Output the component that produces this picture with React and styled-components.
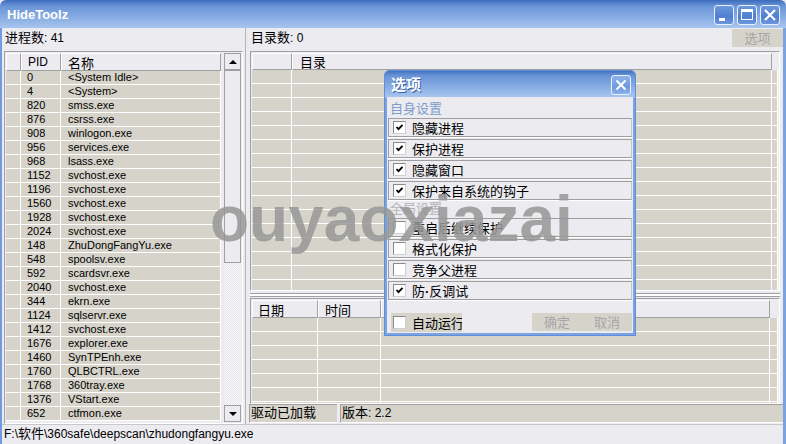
import React from 'react'
import styled, { createGlobalStyle } from 'styled-components'

const LATIN = `"Liberation Sans", "Noto Sans CJK SC", sans-serif`
const CJK = `"Noto Sans CJK SC", "Liberation Sans", sans-serif`

const GlobalStyle = createGlobalStyle`
  html, body {
    margin: 0;
    padding: 0;
    background: #ecebf0;
  }
  body {
    font-family: ${LATIN};
    font-size: 11px;
    color: #000;
  }
  * {
    box-sizing: border-box;
  }
`

const processes = [
  ['0', '<System Idle>'],
  ['4', '<System>'],
  ['820', 'smss.exe'],
  ['876', 'csrss.exe'],
  ['908', 'winlogon.exe'],
  ['956', 'services.exe'],
  ['968', 'lsass.exe'],
  ['1152', 'svchost.exe'],
  ['1196', 'svchost.exe'],
  ['1560', 'svchost.exe'],
  ['1928', 'svchost.exe'],
  ['2024', 'svchost.exe'],
  ['148', 'ZhuDongFangYu.exe'],
  ['548', 'spoolsv.exe'],
  ['592', 'scardsvr.exe'],
  ['2040', 'svchost.exe'],
  ['344', 'ekrn.exe'],
  ['1124', 'sqlservr.exe'],
  ['1412', 'svchost.exe'],
  ['1676', 'explorer.exe'],
  ['1460', 'SynTPEnh.exe'],
  ['1760', 'QLBCTRL.exe'],
  ['1768', '360tray.exe'],
  ['1376', 'VStart.exe'],
  ['652', 'ctfmon.exe'],
]

const ownOptions = [
  ['隐藏进程', true],
  ['保护进程', true],
  ['隐藏窗口', true],
  ['保护来自系统的钩子', true],
]

const globalOptions = [
  ['重启后继续保护', false],
  ['格式化保护', false],
  ['竞争父进程', false],
  ['防·反调试', true],
]

// the middle dot looks narrow in the original, so give it a latin font
const OptionLabel = ({ text }) => {
  const parts = text.split('·')
  if (parts.length === 1) return <OptionText>{text}</OptionText>
  return (
    <OptionText>
      {parts[0]}
      <Dot>·</Dot>
      {parts[1]}
    </OptionText>
  )
}

const CheckBox = ({ checked }) => (
  <Box>
    {checked && (
      <svg width='9' height='9' viewBox='0 0 9 9'>
        <polyline points='1.5,4 3.5,6.2 7.5,1.8' fill='none' stroke='#000' strokeWidth='1.8' />
      </svg>
    )}
  </Box>
)

const App = () => {
  return (
    <Window>
      <GlobalStyle />
      <TitleBar>
        <Title>HideToolz</Title>
        <WinButtons>
          <WinButton>
            <svg width='18' height='18' viewBox='0 0 18 18'>
              <rect x='4' y='12' width='6' height='3' fill='#fff' />
            </svg>
          </WinButton>
          <WinButton>
            <svg width='18' height='18' viewBox='0 0 18 18'>
              <rect x='3.5' y='3.5' width='11' height='10' fill='none' stroke='#fff' strokeWidth='1' />
              <rect x='3' y='3' width='12' height='3' fill='#fff' />
            </svg>
          </WinButton>
          <WinButton>
            <svg width='18' height='18' viewBox='0 0 18 18'>
              <path d='M4 4 L14 14 M14 4 L4 14' stroke='#fff' strokeWidth='2.2' />
            </svg>
          </WinButton>
        </WinButtons>
      </TitleBar>

      <Main>
        <Body>
          <LeftPane>
            <PaneLabel>
              <Cn>进程数</Cn>: 41
            </PaneLabel>
            <ListFrame>
              <ListBody>
                <HeadRow $h={18}>
                  <HeadCell $w={15} />
                  <HeadCell $w={40} $pad={6}>PID</HeadCell>
                  <HeadCell $w={160} $pad={6}>
                    <Cn>名称</Cn>
                  </HeadCell>
                </HeadRow>
                {processes.map(([pid, name], i) => (
                  <Row key={i}>
                    <Cell $w={15} />
                    <Cell $w={40} $pad={6}>{pid}</Cell>
                    <Cell $w={160} $pad={7}>{name}</Cell>
                  </Row>
                ))}
              </ListBody>
              <ScrollBar>
                <ScrollButton>
                  <Arrow />
                </ScrollButton>
                <Thumb />
                <Track />
                <ScrollButton>
                  <Arrow $down />
                </ScrollButton>
              </ScrollBar>
            </ListFrame>
          </LeftPane>

          <PaneSplit />

          <RightPane>
            <TopRow>
              <PaneLabel>
                <Cn>目录数</Cn>: 0
              </PaneLabel>
              <GreyButton $w={51}>选项</GreyButton>
            </TopRow>
            <DirFrame>
              <HeadRow $h={17}>
                <HeadCell $w={40} />
                <HeadCell $w={480} $pad={7}>
                  <Cn>目录</Cn>
                </HeadCell>
              </HeadRow>
              {Array.from({ length: 17 }).map((_, i) => (
                <Row key={i}>
                  <Cell $w={40} />
                  <Cell $w={480} />
                  <Cell $w={6} />
                </Row>
              ))}
            </DirFrame>
            <Splitter />
            <LogFrame>
              <HeadRow $h={18}>
                <HeadCell $w={66} $pad={5}>
                  <Cn>日期</Cn>
                </HeadCell>
                <HeadCell $w={63} $pad={6}>
                  <Cn>时间</Cn>
                </HeadCell>
                <HeadCell $w={389} />
              </HeadRow>
              {Array.from({ length: 7 }).map((_, i) => (
                <Row key={i}>
                  <Cell $w={66} />
                  <Cell $w={63} />
                  <Cell $w={389} />
                  <Cell $w={8} />
                </Row>
              ))}
            </LogFrame>
            <InfoRow>
              <InfoCell $w={88}>
                <Cn>驱动已加载</Cn>
              </InfoCell>
              <InfoCell>
                <Cn>版本</Cn>: 2.2
              </InfoCell>
            </InfoRow>
          </RightPane>
        </Body>
        <StatusBar>
          F:\<Cn>软件</Cn>\360safe\deepscan\zhudongfangyu.exe
        </StatusBar>
      </Main>

      <Dialog>
        <DialogTitle>
          <DialogName>选项</DialogName>
          <DialogClose>
            <svg width='18' height='18' viewBox='0 0 18 18'>
              <path d='M4.5 4.5 L13.5 13.5 M13.5 4.5 L4.5 13.5' stroke='#fff' strokeWidth='2' />
            </svg>
          </DialogClose>
        </DialogTitle>
        <DialogBody>
          <SectionLabel $tone='#7d9dc8'>自身设置</SectionLabel>
          {ownOptions.map(([label, checked]) => (
            <OptionRow key={label}>
              <CheckBox checked={checked} />
              <OptionLabel text={label} />
            </OptionRow>
          ))}
          <SectionLabel $tone='#b4b4b6'>全局设置</SectionLabel>
          {globalOptions.map(([label, checked]) => (
            <OptionRow key={label}>
              <CheckBox checked={checked} />
              <OptionLabel text={label} />
            </OptionRow>
          ))}
          <DialogFooter>
            <AutoRun>
              <CheckBox />
              <OptionText>自动运行</OptionText>
            </AutoRun>
            <FooterButtons>
              <GreyButton $w={50}>确定</GreyButton>
              <GreyButton $w={50}>取消</GreyButton>
            </FooterButtons>
          </DialogFooter>
        </DialogBody>
      </Dialog>

      <Watermark>ouyaoxiazai</Watermark>
    </Window>
  )
}

const Window = styled.div`
  position: relative;
  width: 786px;
  height: 444px;
  overflow: hidden;
  display: flex;
  flex-direction: column;
  background: #ecebf0;
`

const TitleBar = styled.div`
  height: 28px;
  flex: none;
  display: flex;
  align-items: center;
  justify-content: space-between;
  padding: 0 6px 0 7px;
  background: linear-gradient(to bottom, #3d6bbd 0%, #6a95d6 22%, #86abe3 60%, #a7c5ee 100%);
  border-radius: 6px 6px 0 0;
`

const Title = styled.span`
  font-family: ${LATIN};
  font-weight: bold;
  font-size: 13px;
  color: #fff;
  margin-top: 1px;
`

const WinButtons = styled.div`
  display: flex;
  gap: 3px;
  margin-top: 2px;
`

const WinButton = styled.div`
  width: 20px;
  height: 20px;
  border: 1px solid #e9f0fb;
  border-radius: 3px;
  background: linear-gradient(to bottom, #6d98de, #4f7fd2 60%, #6d97dc);
  display: flex;
  align-items: center;
  justify-content: center;
`

const Main = styled.div`
  flex: 1;
  display: flex;
  flex-direction: column;
  border-left: 2px solid #6f9be0;
  border-right: 3px solid #7aa3e2;
`

const Body = styled.div`
  height: 396px;
  display: flex;
`

const Cn = styled.span`
  font-family: ${CJK};
  font-size: 13px;
  line-height: 1;
`

const Dot = styled.span`
  font-family: "Liberation Sans", sans-serif;
  font-weight: bold;
`

const LeftPane = styled.div`
  width: 243px;
  padding-left: 2px;
  padding-right: 2px;
  display: flex;
  flex-direction: column;
`

const PaneLabel = styled.div`
  height: 23px;
  padding-top: 2px;
  padding-left: 1px;
  font-size: 12px;
  line-height: 15px;
  white-space: nowrap;
`

const ListFrame = styled.div`
  flex: 1;
  min-height: 0;
  display: flex;
  border: 1px solid #a0a0a0;
  border-right-color: #fff;
  border-bottom-color: #fff;
  padding: 1px;
  overflow: hidden;
`

const ListBody = styled.div`
  flex: 1;
  overflow: hidden;
`

const HeadRow = styled.div`
  height: ${(p) => p.$h}px;
  display: flex;
  flex: none;
`

const HeadCell = styled.div`
  width: ${(p) => p.$w}px;
  flex: none;
  height: 100%;
  padding-left: ${(p) => p.$pad || 0}px;
  display: flex;
  align-items: center;
  font-size: 12px;
  white-space: nowrap;
  background: #ecebf0;
  border-top: 1px solid #fff;
  border-left: 1px solid #fff;
  border-right: 1px solid #a0a0a0;
  border-bottom: 1px solid #a0a0a0;
`

const Row = styled.div`
  height: 14px;
  display: flex;
  flex: none;
`

const Cell = styled.div`
  width: ${(p) => p.$w}px;
  flex: none;
  height: 14px;
  padding-left: ${(p) => p.$pad || 0}px;
  background: #d6d3ca;
  border-right: 1px solid #fff;
  border-bottom: 1px solid #fff;
  font-size: 11px;
  line-height: 13px;
  white-space: nowrap;
  overflow: hidden;
`

const ScrollBar = styled.div`
  width: 17px;
  flex: none;
  display: flex;
  flex-direction: column;
`

const ScrollButton = styled.div`
  height: 17px;
  flex: none;
  border: 1px solid #a0a0a0;
  background: #ecebf0;
  display: flex;
  align-items: center;
  justify-content: center;
`

const Arrow = styled.div`
  width: 0;
  height: 0;
  border-left: 4px solid transparent;
  border-right: 4px solid transparent;
  ${(p) => (p.$down ? 'border-top: 4px solid #000;' : 'border-bottom: 4px solid #000;')}
`

const Thumb = styled.div`
  height: 193px;
  flex: none;
  border: 1px solid #a0a0a0;
  background: #ecebf0;
`

const Track = styled.div`
  flex: 1;
  background-color: #fbfbfb;
  background-image: repeating-conic-gradient(#e4e3e8 0 25%, #fbfbfb 0 50%);
  background-size: 2px 2px;
`

const PaneSplit = styled.div`
  width: 3px;
  flex: none;
  border-left: 1px solid #b4b4b4;
`

const RightPane = styled.div`
  flex: 1;
  display: flex;
  flex-direction: column;
  padding-left: 2px;
  padding-right: 3px;
`

const TopRow = styled.div`
  display: flex;
  justify-content: space-between;
  margin-right: -3px;
  height: 23px;
`

const GreyButton = styled.div`
  width: ${(p) => p.$w}px;
  height: 18px;
  margin-top: 1px;
  background: #d6d3ca;
  color: #a6a6a6;
  font-family: ${CJK};
  font-size: 13px;
  line-height: 18px;
  text-align: center;
`

const DirFrame = styled.div`
  height: 240px;
  flex: none;
  border: 1px solid #a0a0a0;
  border-right-color: #fff;
  border-bottom-color: #fff;
  padding: 1px;
  overflow: hidden;
`

const Splitter = styled.div`
  height: 7px;
  flex: none;
  background: linear-gradient(
    to bottom,
    transparent 2px,
    #a0a0a0 2px,
    #a0a0a0 3px,
    #fff 3px,
    #fff 5px,
    #a0a0a0 5px,
    #a0a0a0 6px,
    transparent 6px
  );
`

const LogFrame = styled.div`
  flex: 1;
  min-height: 0;
  border: 1px solid #a0a0a0;
  border-right-color: #fff;
  border-bottom-color: #fff;
  padding: 1px;
  overflow: hidden;
`

const InfoRow = styled.div`
  height: 19px;
  flex: none;
  display: flex;
  gap: 3px;
  margin-right: -3px;
  margin-left: -1px;
  margin-bottom: 1px;
`

const InfoCell = styled.div`
  ${(p) => (p.$w ? `width: ${p.$w}px; flex: none;` : 'flex: 1;')}
  background: #d6d3ca;
  border-top: 1px solid #a0a0a0;
  border-left: 1px solid #a0a0a0;
  border-bottom: 1px solid #fff;
  font-size: 12px;
  line-height: 17px;
  padding-left: 1px;
  white-space: nowrap;
`

const StatusBar = styled.div`
  flex: 1;
  border-top: 1px solid #c8c8c8;
  padding-left: 2px;
  font-size: 12px;
  line-height: 18px;
  white-space: nowrap;
`

const Dialog = styled.div`
  position: absolute;
  left: 384px;
  top: 70px;
  width: 252px;
  height: 266px;
  display: flex;
  flex-direction: column;
  padding: 0 3px 3px 3px;
  border-radius: 6px 6px 0 0;
  background: linear-gradient(to bottom, #3d6bbd 0px, #6a95d6 6px, #86abe3 16px, #a7c5ee 27px, #7ba3e2 28px);
  box-shadow: inset 0 0 0 1px #5f8fd8;
`

const DialogTitle = styled.div`
  height: 27px;
  flex: none;
  display: flex;
  align-items: center;
  justify-content: space-between;
  padding: 0 2px 0 4px;
`

const DialogName = styled.span`
  font-family: ${CJK};
  font-weight: bold;
  font-size: 15px;
  color: #fff;
  text-shadow: 1px 1px 0 #3a62a8;
`

const DialogClose = styled.div`
  width: 20px;
  height: 20px;
  margin-top: 2px;
  border: 1px solid #eaf1fc;
  border-radius: 3px;
  background: linear-gradient(to bottom, #8db2ea, #6f9ade 60%, #8cb0e8);
  display: flex;
  align-items: center;
  justify-content: center;
`

const DialogBody = styled.div`
  flex: 1;
  background: #ecebf0;
  display: flex;
  flex-direction: column;
  padding: 3px 1px 0 1px;
`

const SectionLabel = styled.div`
  height: 16px;
  padding-left: 2px;
  font-family: ${CJK};
  font-size: 13px;
  line-height: 16px;
  color: ${(p) => p.$tone};
`

const OptionRow = styled.div`
  height: 19px;
  margin-top: 2px;
  display: flex;
  align-items: center;
  gap: 6px;
  padding-left: 4px;
  border: 1px solid #9e9e9e;
  border-right-color: #c4c4c4;
  box-shadow: 0 1px 0 #fff;
`

const Box = styled.div`
  width: 13px;
  height: 13px;
  flex: none;
  background: #fff;
  border: 1px solid #8a8a8a;
  border-right-color: #d0d0d0;
  border-bottom-color: #d0d0d0;
  display: flex;
  align-items: center;
  justify-content: center;
`

const OptionText = styled.span`
  font-family: ${CJK};
  font-size: 13px;
  line-height: 1;
  white-space: nowrap;
`

const DialogFooter = styled.div`
  margin-top: auto;
  margin-bottom: 1px;
  height: 19px;
  display: flex;
  justify-content: space-between;
`

const AutoRun = styled.div`
  width: 71px;
  margin-left: 3px;
  display: flex;
  align-items: center;
  gap: 6px;
  padding-left: 2px;
  background: #d6d3ca;
  overflow: hidden;
`

const FooterButtons = styled.div`
  display: flex;
  margin-top: -1px;
`

const Watermark = styled.div`
  position: absolute;
  left: 210px;
  top: 187px;
  font-family: "Liberation Sans", Arial, sans-serif;
  font-weight: bold;
  font-size: 64px;
  line-height: 64px;
  color: rgba(150, 150, 150, 0.85);
  pointer-events: none;
  white-space: nowrap;
`

export default App
